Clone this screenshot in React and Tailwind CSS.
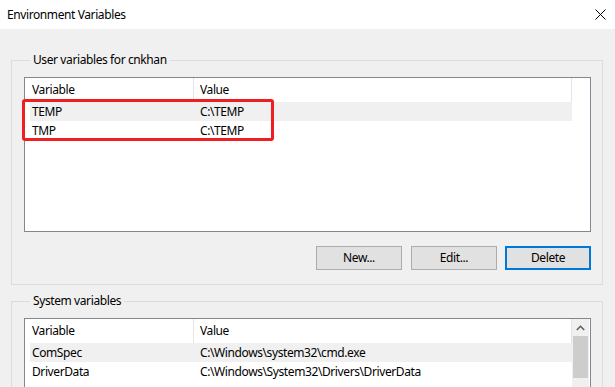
import React from "react";

const FONT = { fontFamily: '"Noto Sans", "Segoe UI", Arial, sans-serif' };

function Header() {
  return (
    <div className="flex h-[24px] items-center">
      <div className="ml-[5px] flex h-full w-[163px] items-center pl-[2px]">Variable</div>
      <div className="flex h-full w-[378px] items-center border-l border-[#e5e5e5] pl-[6px]">Value</div>
      <div className="h-full border-l border-[#e5e5e5]" />
    </div>
  );
}

function Row({ name, value, selected }) {
  return (
    <div className={"ml-[5px] flex h-[19px] w-[542px] items-center " + (selected ? "bg-[#f0f0f0]" : "")}>
      <div className="w-[164px] pl-[2px]">{name}</div>
      <div className="pl-[6px] whitespace-nowrap">{value}</div>
    </div>
  );
}

function Group({ label, children, className }) {
  return (
    <fieldset className={"ml-[11px] w-[592px] border border-[#dcdcdc] pl-[12px] pr-[11px] pt-[9px] " + className}>
      <legend className="ml-[6px] px-[3px] leading-[16px]">{label}</legend>
      {children}
    </fieldset>
  );
}

export default function App() {
  return (
    <div className="h-[387px] w-[615px] overflow-hidden bg-[#f0f0f0] text-[12px] tracking-[-0.4px] text-black" style={FONT}>
      <div className="flex h-[29px] items-center justify-between bg-white pl-[7px] pr-[10px]">
        <span>Environment Variables</span>
        <svg width="11" height="11" viewBox="0 0 11 11" className="mr-[-1px]">
          <path d="M0.5 0.5 L10.5 10.5 M10.5 0.5 L0.5 10.5" stroke="#000" strokeWidth="1" fill="none" />
        </svg>
      </div>

      <Group label="User variables for cnkhan" className="mt-[23px] pb-[14px]">
        <div className="relative h-[155px] w-[567px] border border-[#828790] bg-white">
          <Header />
          <Row name="TEMP" value="C:\TEMP" selected />
          <Row name="TMP" value="C:\TEMP" />
          <div className="pointer-events-none absolute left-[-3px] top-[21px] h-[42px] w-[252px] rounded-[3px] border-[3px] border-[#f01e1e]" />
        </div>
        <div className="mt-[14px] flex w-[567px] justify-end">
          <button className="h-[24px] w-[86px] border border-[#adadad] bg-[#e1e1e1]">New...</button>
          <button className="ml-[9px] h-[24px] w-[86px] border border-[#adadad] bg-[#e1e1e1]">Edit...</button>
          <button className="ml-[8px] h-[24px] w-[86px] border-2 border-[#0078d7] bg-[#e1e1e1]">Delete</button>
        </div>
      </Group>

      <Group label="System variables" className="mt-[8px] pb-[14px]">
        <div className="flex h-[155px] w-[567px] border border-[#828790] bg-white">
          <div className="w-[547px]">
            <Header />
            <Row name="ComSpec" value="C:\Windows\system32\cmd.exe" selected />
            <Row name="DriverData" value="C:\Windows\System32\Drivers\DriverData" />
          </div>
          <div className="flex w-[17px] flex-col bg-[#f0f0f0]">
            <div className="flex h-[17px] items-center justify-center">
              <svg width="9" height="6" viewBox="0 0 9 6">
                <path d="M0.8 5 L4.5 1.3 L8.2 5" stroke="#606060" strokeWidth="1.6" fill="none" />
              </svg>
            </div>
            <div className="mx-[1px] h-[42px] bg-[#cdcdcd]" />
          </div>
        </div>
      </Group>
    </div>
  );
}
